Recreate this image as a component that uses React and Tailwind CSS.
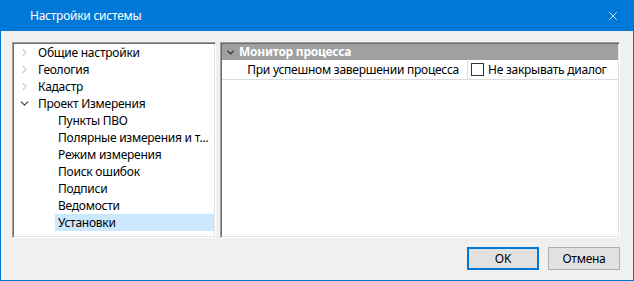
import React from "react";
import { ChevronRight, ChevronDown, X } from "lucide-react";

const font = { fontFamily: '"Noto Sans", "Open Sans", sans-serif' };

const tree = [
  { label: "Общие настройки", level: 0, icon: "right" },
  { label: "Геология", level: 0, icon: "right" },
  { label: "Кадастр", level: 0, icon: "right" },
  { label: "Проект Измерения", level: 0, icon: "down" },
  { label: "Пункты ПВО", level: 1 },
  { label: "Полярные измерения и т...", level: 1 },
  { label: "Режим измерения", level: 1 },
  { label: "Поиск ошибок", level: 1 },
  { label: "Подписи", level: 1 },
  { label: "Ведомости", level: 1 },
  { label: "Установки", level: 1, selected: true },
];

const TreeRow = ({ item }) => (
  <div className="flex h-[17px] items-center whitespace-nowrap">
    <div className="flex w-[20px] shrink-0 justify-center">
      {item.icon === "right" && <ChevronRight size={13} strokeWidth={1.8} className="text-[#a6a6a6]" />}
      {item.icon === "down" && <ChevronDown size={13} strokeWidth={2} className="text-[#404040]" />}
    </div>
    {item.level === 0 ? (
      <span className="pl-[4px] text-[12px] leading-[17px] text-black">{item.label}</span>
    ) : (
      <span
        className={
          "ml-[21px] flex h-[17px] flex-1 items-center pl-[3px] text-[12px] text-black " +
          (item.selected ? "bg-[#cce8ff]" : "")
        }
      >
        {item.label}
      </span>
    )}
  </div>
);

export default function App() {
  return (
    <div
      style={font}
      className="flex h-[281px] w-[634px] flex-col border border-t-0 border-[#0078d7] bg-[#f0f0f0] tracking-[-0.25px]"
    >
      <div className="-mx-px flex h-[31px] shrink-0 items-center justify-between bg-[#0078d7] pl-[30px] pr-[14px]">
        <span className="text-[12px] text-white">Настройки системы</span>
        <X size={14} strokeWidth={1.4} className="text-white" />
      </div>

      <div className="flex flex-1 flex-col pl-[11px] pr-[13px] pt-[11px]">
        <div className="flex h-[196px] gap-[4px]">
          <div className="w-[204px] shrink-0 overflow-hidden border border-b-white border-l-[#a0a0a0] border-r-white border-t-[#a0a0a0] bg-white pt-[1px] shadow-[inset_1px_1px_0_#696969,inset_-1px_-1px_0_#e3e3e3]">
            <div className="pl-[1px] pr-[1px]">
              {tree.map((item) => (
                <TreeRow key={item.label} item={item} />
              ))}
            </div>
          </div>

          <div className="flex-1 border border-b-white border-l-[#a0a0a0] border-r-white border-t-[#a0a0a0] bg-white p-[1px] shadow-[inset_1px_1px_0_#696969,inset_-1px_-1px_0_#e3e3e3]">
            <div className="flex h-[16px] items-center bg-[#a0a0a0] pl-[3px]">
              <ChevronDown size={11} strokeWidth={3} className="text-[#333333]" />
              <span className="ml-[3px] text-[12px] font-bold text-white">Монитор процесса</span>
            </div>
            <div className="flex h-[20px] border-b border-[#dcdcdc]">
              <div className="flex w-[246px] items-center justify-end whitespace-nowrap border-r border-[#dcdcdc] pr-[8px] text-[12px] text-black">
                При успешном завершении процесса
              </div>
              <div className="flex items-center whitespace-nowrap pl-[3px]">
                <span className="h-[13px] w-[13px] border border-[#333333] bg-white" />
                <span className="ml-[4px] text-[12px] text-black">Не закрывать диалог</span>
              </div>
            </div>
          </div>
        </div>

        <div className="mt-[9px] flex justify-end gap-[9px]">
          <button className="flex h-[23px] w-[72px] items-center justify-center border-2 border-[#0078d7] bg-[#e1e1e1] text-[12px] text-black">
            OK
          </button>
          <button className="flex h-[23px] w-[72px] items-center justify-center border border-[#adadad] bg-[#e1e1e1] text-[12px] text-black">
            Отмена
          </button>
        </div>
      </div>
    </div>
  );
}
